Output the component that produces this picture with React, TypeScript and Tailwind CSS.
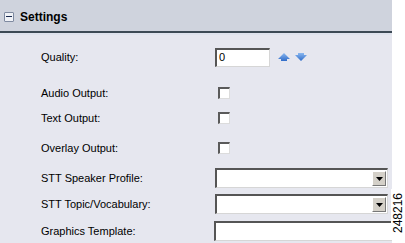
import {FunctionComponent} from "react";

const Checkbox: FunctionComponent = () => (
    <div className="w-[12px] h-[12px] bg-white border-t-2 border-l-2 border-[#5a5a5a] border-r border-b border-r-[#dcdcdc] border-b-[#dcdcdc]"/>
);

const SelectBox: FunctionComponent<{arrow?: boolean}> = ({arrow = true}) => (
    <div className="w-[173px] h-[20px] bg-white border-t-2 border-l-2 border-[#555] border-r border-b border-r-[#d6d6d6] border-b-[#d6d6d6] flex justify-end items-center pr-[1px]">
        {arrow && (
            <div className="w-[14px] h-[15px] bg-[#d4d0c8] border border-t-white border-l-white border-r-[#777] border-b-[#777] flex items-center justify-center">
                <svg width="7" height="4" viewBox="0 0 7 4"><path d="M0 0h7L3.5 4z" fill="#000"/></svg>
            </div>
        )}
    </div>
);

const Row: FunctionComponent<{label: string; h: number; children?: React.ReactNode}> = ({label, h, children}) => (
    <div className="flex items-center" style={{height: h}}>
        <div className="w-[215px] pl-[41px] text-[11px] text-black">{label}</div>
        {children}
    </div>
);

const App: FunctionComponent = () => {
    return (
        <div className="w-[405px] h-[243px] bg-white overflow-hidden relative font-['Liberation_Sans',Arial,sans-serif]">
            <div className="w-[392px] h-[243px] bg-[#e6e7ef]">
                <div className="h-[31px] bg-[#cfd3dd] flex items-center pl-[4px] pt-[2px]">
                    <div className="w-[10px] h-[10px] border border-[#7f8aa0] bg-[#f0f2f7] rounded-[1px] flex items-center justify-center">
                        <div className="w-[6px] h-[1px] bg-[#1a2a50]"/>
                    </div>
                    <span className="ml-[6px] text-[12px] font-bold text-black">Settings</span>
                </div>
                <div className="h-[2px] bg-[#3d4a55]"/>
                <div className="h-[2px] bg-[#dfe3ed]"/>
                <div className="pt-[11px]">
                    <Row label="Quality:" h={22}>
                        <div className="w-[55px] h-[19px] bg-white border-t-2 border-l-2 border-[#555] border-r border-b border-r-[#d6d6d6] border-b-[#d6d6d6] text-[11px] leading-[15px] pl-[2px]">0</div>
                        <svg className="ml-[8px]" width="12" height="8" viewBox="0 0 12 8">
                            <defs>
                                <linearGradient id="ag" x1="0" y1="0" x2="0" y2="1">
                                    <stop offset="0" stopColor="#8ab8f0"/>
                                    <stop offset="1" stopColor="#2f6cc8"/>
                                </linearGradient>
                            </defs>
                            <path d="M6 0L12 6H9V8H3V6H0z" fill="url(#ag)"/>
                        </svg>
                        <svg className="ml-[5px]" width="12" height="8" viewBox="0 0 12 8">
                            <path d="M3 0H9V2H12L6 8L0 2H3z" fill="url(#ag)"/>
                        </svg>
                    </Row>
                    <div className="h-[14px]"/>
                    <Row label="Audio Output:" h={22}><div className="ml-[3px]"><Checkbox/></div></Row>
                    <div className="h-[3px]"/>
                    <Row label="Text Output:" h={22}><div className="ml-[3px]"><Checkbox/></div></Row>
                    <div className="h-[8px]"/>
                    <Row label="Overlay Output:" h={22}><div className="ml-[3px]"><Checkbox/></div></Row>
                    <div className="h-[8px]"/>
                    <Row label="STT Speaker Profile:" h={22}><SelectBox/></Row>
                    <div className="h-[4px]"/>
                    <Row label="STT Topic/Vocabulary:" h={22}><SelectBox/></Row>
                    <div className="h-[5px]"/>
                    <Row label="Graphics Template:" h={22}>
                        <div className="w-[180px] h-[20px] bg-white border-t-2 border-l-2 border-[#555] border-b border-b-[#d6d6d6]"/>
                    </Row>
                </div>
            </div>
            <div className="absolute left-[391px] top-[189px] w-[14px] h-[48px] bg-white flex items-center justify-center">
                <span className="-rotate-90 text-[12px] text-black whitespace-nowrap">248216</span>
            </div>
        </div>
    );
};

export default App;
